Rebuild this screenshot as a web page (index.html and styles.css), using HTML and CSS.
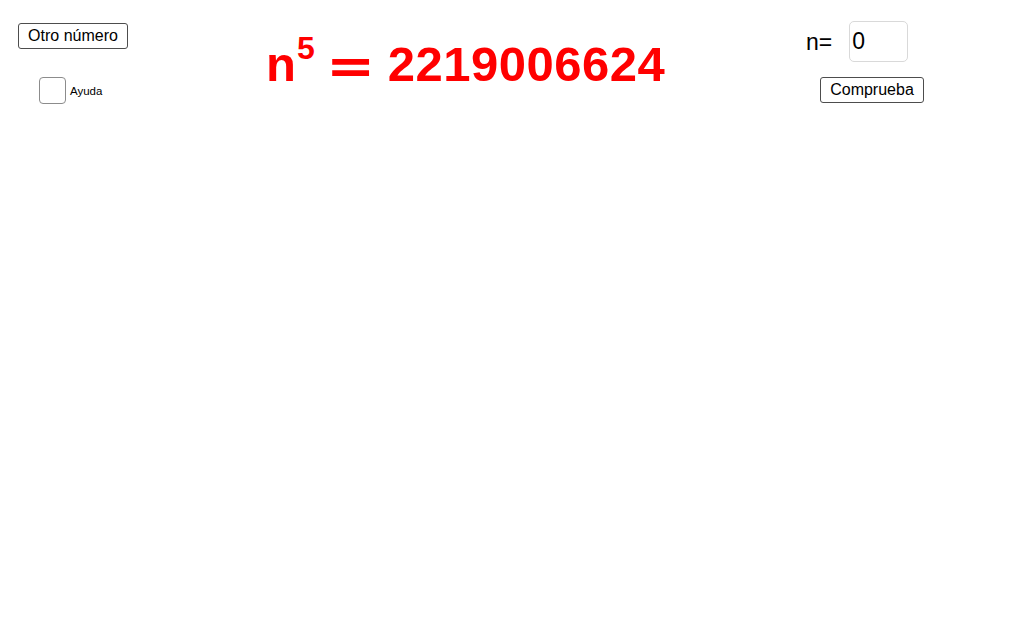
FILE: index.html
```html
<!DOCTYPE html>
<html lang="es">
<head>
<meta charset="utf-8">
<title>Potencia</title>
<link rel="stylesheet" href="styles.css">
</head>
<body>
<div class="canvas">
  <button class="btn btn-otro">Otro número</button>
  <label class="check">
    <span class="box"></span>
    <span class="check-label">Ayuda</span>
  </label>
  <div class="formula"><span class="var">n</span><sup class="exp">5</sup><span class="eq">=</span><span class="num">2219006624</span></div>
  <div class="answer">
    <span class="n-label">n=</span>
    <span class="input">0</span>
  </div>
  <button class="btn btn-comprueba">Comprueba</button>
</div>
</body>
</html>
```
FILE: styles.css
```css
html, body {
  margin: 0;
  padding: 0;
  background: #fff;
}
.canvas {
  position: relative;
  width: 1024px;
  height: 620px;
  overflow: hidden;
  font-family: "Liberation Sans", Arial, sans-serif;
  color: #000;
}
.btn {
  position: absolute;
  box-sizing: border-box;
  height: 26px;
  padding: 0;
  background: #fff;
  border: 1px solid #4d4d4d;
  border-radius: 3px;
  font-family: "Liberation Sans", Arial, sans-serif;
  font-size: 16px;
  line-height: 24px;
  color: #000;
  text-align: center;
}
.btn-otro {
  left: 18px;
  top: 23px;
  width: 110px;
}
.btn-comprueba {
  left: 820px;
  top: 77px;
  width: 104px;
}
.check {
  position: absolute;
  left: 39px;
  top: 77px;
  display: flex;
  align-items: center;
  gap: 4px;
}
.box {
  box-sizing: border-box;
  width: 27px;
  height: 27px;
  border: 1px solid #8c8c8c;
  border-radius: 4px;
  background: #fff;
}
.check-label {
  font-size: 11.5px;
  line-height: 14px;
  margin-top: 0;
}
.formula {
  position: absolute;
  left: 266px;
  top: 36px;
  display: flex;
  align-items: baseline;
  color: #ff0000;
  font-family: "Liberation Sans", Arial, sans-serif;
  font-weight: bold;
  font-size: 49px;
  line-height: 56px;
  white-space: nowrap;
}
.var {
  display: inline-block;
}
.exp {
  font-size: 32px;
  line-height: 1;
  vertical-align: baseline;
  position: relative;
  top: -22px;
  margin-left: 1px;
}
.eq {
  display: inline-block;
  margin-left: 15px;
  margin-right: 17px;
  font-weight: bold;
  font-family: "DejaVu Sans", sans-serif;
  transform: translateY(2px) scaleX(1.2);
}
.num {
  letter-spacing: 0.5px;
}
.answer {
  position: absolute;
  left: 806px;
  top: 21px;
  display: flex;
  align-items: center;
  gap: 17px;
}
.n-label {
  font-size: 23px;
  line-height: 40px;
}
.input {
  box-sizing: border-box;
  width: 59px;
  height: 41px;
  border: 1px solid #d9d9d9;
  border-radius: 5px;
  padding-left: 2px;
  font-size: 23px;
  line-height: 39px;
}
```
